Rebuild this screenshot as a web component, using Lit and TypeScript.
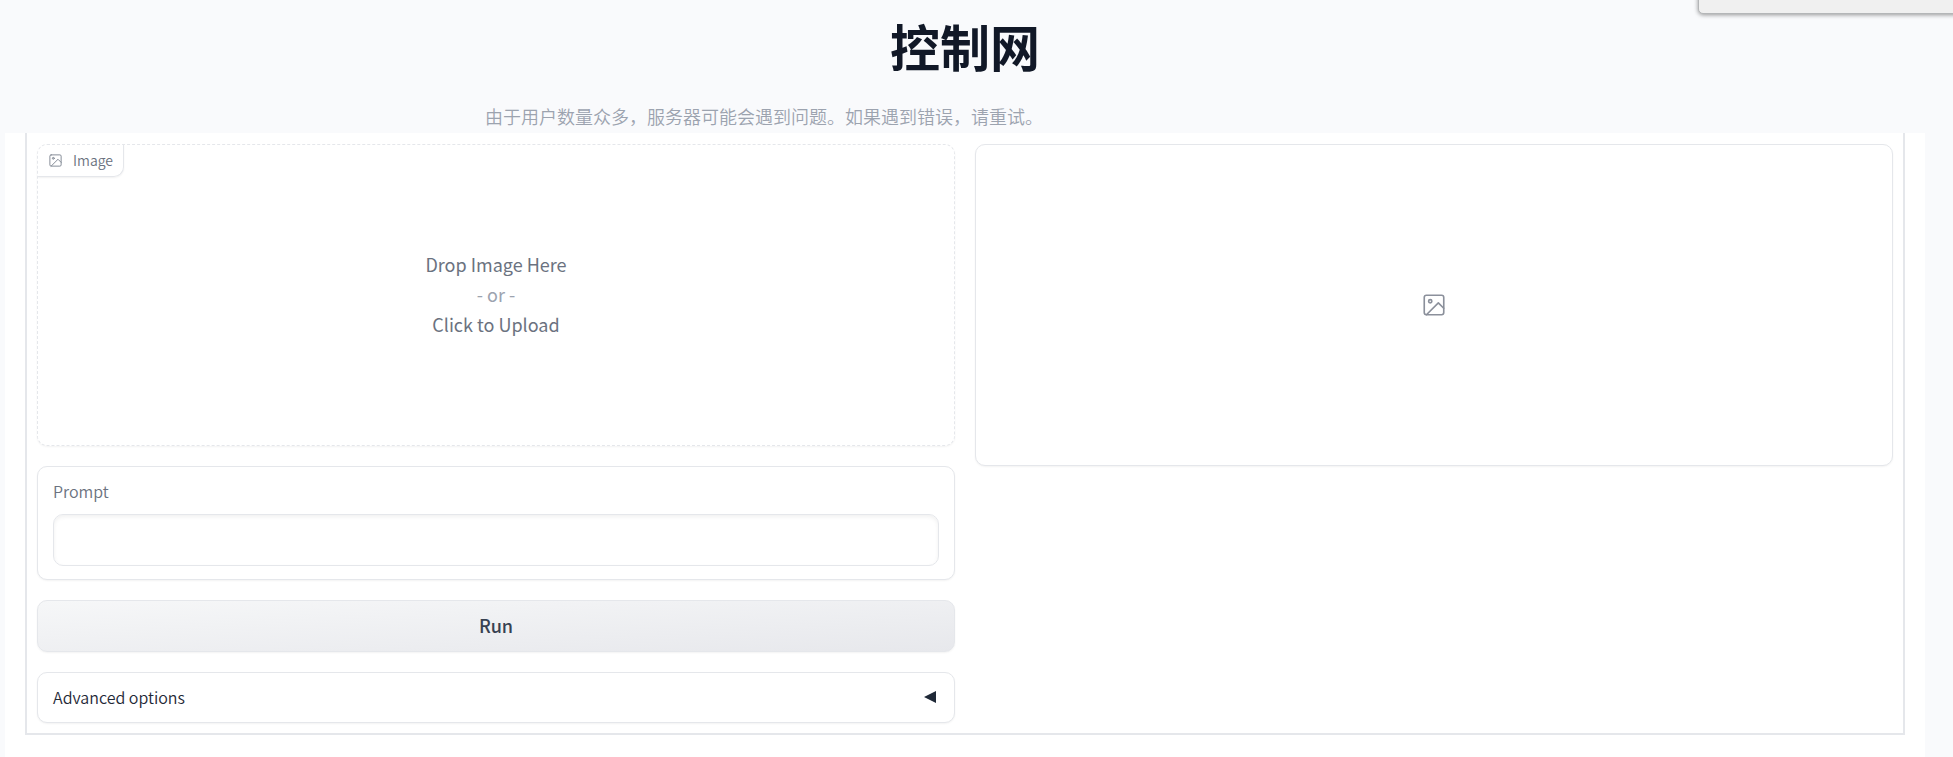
import { LitElement, html, css, svg } from "lit";
import { customElement, property, state } from "lit/decorators.js";

@customElement("image-icon")
class ImageIcon extends LitElement {
  static styles = css`
    :host { display: block; }
    svg { display: block; width: 100%; height: 100%; }
  `;
  render() {
    return html`<svg viewBox="0 0 24 24" fill="none" stroke="currentColor" stroke-width="1.5"
      stroke-linecap="round" stroke-linejoin="round" aria-hidden="true">
      ${svg`<rect x="3" y="3" width="18" height="18" rx="2" ry="2"></rect>
      <circle cx="8.5" cy="8.5" r="1.5"></circle>
      <polyline points="21 15 16 10 5 21"></polyline>`}
    </svg>`;
  }
}

@customElement("app-root")
class AppRoot extends LitElement {
  @property() heading = "控制网";
  @state() private open = false;

  static styles = css`
    :host {
      display: flex;
      flex-direction: column;
      box-sizing: border-box;
      position: relative;
      min-height: 100vh;
      padding: 0 28px 0 5px;
      overflow: hidden;
      background: #f9fafc;
      color: #1f2937;
      font-family: "Noto Sans CJK SC", "Noto Sans", sans-serif;
      font-size: 16px;
      line-height: 24px;
    }
    *, *::before, *::after { box-sizing: border-box; }
    .corner {
      position: absolute;
      top: -20px;
      right: -20px;
      width: 275px;
      height: 34px;
      background: #f0f0f0;
      border: 1px solid #b4b6b8;
      border-radius: 5px;
      box-shadow: 0 1px 4px rgba(0, 0, 0, 0.4);
    }
    header { height: 133px; padding-top: 20px; }
    h1 {
      margin: 0;
      font-size: 50px;
      line-height: 50px;
      font-weight: 700;
      color: #111827;
      text-align: center;
    }
    .notice {
      max-width: 960px;
      margin: 32px auto 0;
      font-size: 18px;
      line-height: 28px;
      font-weight: 350;
      color: #9ca3af;
    }
    main { flex: 1; padding: 0 20px 22px; background: #fff; }
    .frame {
      display: grid;
      grid-template-columns: 1fr 1fr;
      align-items: start;
      gap: 20px;
      padding: 11px 10px 10px;
      border: 2px solid #e5e7eb;
      border-top: 0;
    }
    .stack { display: flex; flex-direction: column; gap: 20px; }
    .card {
      position: relative;
      background: #fff;
      border: 1px solid #e5e7eb;
      border-radius: 10px;
      box-shadow: 0 1px 2px rgba(0, 0, 0, 0.05);
    }
    .drop { height: 302px; border-style: dashed; overflow: hidden; }
    .tag {
      position: absolute;
      top: -1px;
      left: 0;
      display: flex;
      align-items: center;
      gap: 10px;
      height: 33px;
      padding: 0 10px;
      border: solid #e5e7eb;
      border-width: 0 1px 1px 0;
      border-bottom-right-radius: 10px;
      box-shadow: 0 1px 2px rgba(0, 0, 0, 0.06);
      font-size: 14px;
      font-weight: 350;
      color: #6b7280;
    }
    .tag image-icon { width: 15px; height: 15px; color: #7f8692; }
    .upload {
      display: flex;
      flex-direction: column;
      align-items: center;
      justify-content: center;
      width: 100%;
      height: 100%;
      padding: 0 0 2px;
      border: 0;
      background: none;
      font: inherit;
      font-size: 18px;
      line-height: 30px;
      color: #6b7280;
      cursor: pointer;
    }
    .or { color: #9ca3af; }
    .result { display: flex; align-items: center; justify-content: center; height: 322px; }
    .result image-icon { width: 26px; height: 26px; color: #8b909b; }
    .field { padding: 12px 15px 13px; margin: 0; }
    .field label { display: block; margin-bottom: 11px; font-weight: 350; color: #6b7280; }
    .field input {
      display: block;
      width: 100%;
      height: 52px;
      padding: 10px 12px;
      border: 1px solid #e5e7eb;
      border-radius: 10px;
      background: #fff;
      box-shadow: inset 0 2px 4px rgba(0, 0, 0, 0.06);
      font: inherit;
      outline: none;
    }
    .run {
      height: 52px;
      padding: 0 0 2px;
      background: linear-gradient(to bottom right, #f6f7f8, #e7e8ec);
      font: inherit;
      font-size: 18px;
      font-weight: 500;
      color: #374151;
      cursor: pointer;
    }
    .more {
      display: flex;
      align-items: center;
      justify-content: space-between;
      height: 51px;
      padding: 0 16px 2px 15px;
      font: inherit;
      font-weight: 350;
      color: #1f2937;
      cursor: pointer;
    }
    .arrow { width: 14px; height: 12px; fill: currentColor; }
    .arrow.open { transform: rotate(-90deg); }
  `;

  render() {
    return html`
      <div class="corner"></div>
      <header>
        <h1>${this.heading}</h1>
        <p class="notice">由于用户数量众多，服务器可能会遇到问题。如果遇到错误，请重试。</p>
      </header>
      <main>
        <div class="frame">
          <div class="stack">
            <div class="card drop">
              <div class="tag"><image-icon></image-icon><span id="image-label">Image</span></div>
              <button class="upload" type="button" aria-describedby="image-label">
                <span>Drop Image Here</span>
                <span class="or">- or -</span>
                <span>Click to Upload</span>
              </button>
            </div>
            <div class="card field">
              <label for="prompt">Prompt</label>
              <input id="prompt" type="text" />
            </div>
            <button class="card run" type="button">Run</button>
            <button class="card more" type="button" aria-expanded=${this.open}
              @click=${() => (this.open = !this.open)}>
              <span>Advanced options</span>
              <svg class="arrow ${this.open ? "open" : ""}" viewBox="0 0 14 12" aria-hidden="true">
                <path d="M0 6 L12 0 V12 Z"></path>
              </svg>
            </button>
          </div>
          <div class="card result"><image-icon></image-icon></div>
        </div>
      </main>
    `;
  }
}
